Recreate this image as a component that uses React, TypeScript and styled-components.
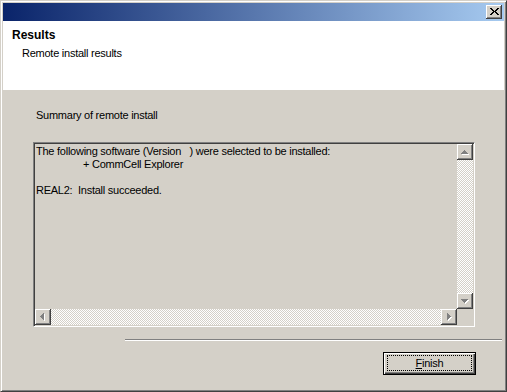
import React from "react";
import styled, { createGlobalStyle } from "styled-components";

const GlobalStyle = createGlobalStyle`
  html, body {
    margin: 0;
    padding: 0;
    background: #d4d0c8;
  }
`;

const FACE = "#d4d0c8";

const Window = styled.div`
  width: 507px;
  height: 392px;
  box-sizing: border-box;
  border: 1px solid;
  border-color: ${FACE} #404040 #404040 ${FACE};
  box-shadow: inset 1px 1px #fff, inset -1px -1px #808080;
  padding: 2px;
  background: ${FACE};
  display: flex;
  flex-direction: column;
  font-family: "Liberation Sans", Arial, sans-serif;
  font-size: 11px;
  line-height: 13px;
  letter-spacing: -0.25px;
  color: #000;
`;

const TitleBar = styled.div`
  height: 18px;
  flex-shrink: 0;
  background: linear-gradient(to right, #0a246a, #a6caf0);
  display: flex;
  align-items: center;
  justify-content: flex-end;
  padding-right: 2px;
`;

const CloseButton = styled.div`
  width: 16px;
  height: 14px;
  box-sizing: border-box;
  background: ${FACE};
  box-shadow: inset -1px -1px #404040, inset 1px 1px #fff,
    inset -2px -2px #808080;
  display: flex;
  align-items: center;
  justify-content: center;
  padding: 0 0 1px 0;
`;

const Header = styled.div`
  height: 69px;
  flex-shrink: 0;
  background: #fff;
  padding: 7px 0 0 9px;
  box-sizing: border-box;
`;

const Title = styled.div`
  font-size: 12px;
  line-height: 14px;
  font-weight: bold;
  letter-spacing: 0;
`;

const Subtitle = styled.div`
  margin-top: 5px;
  padding-left: 10px;
`;

const Body = styled.div`
  flex: 1;
  display: flex;
  flex-direction: column;
  padding-top: 19px;
`;

const SectionLabel = styled.div`
  margin-left: 33px;
`;

const TextBox = styled.div`
  margin: 20px 0 0 30px;
  width: 442px;
  height: 185px;
  box-sizing: border-box;
  border: 1px solid;
  border-color: #808080 #fff #fff #808080;
  box-shadow: inset 1px 1px #404040, inset -1px -1px ${FACE};
  padding: 1px;
  display: grid;
  grid-template-columns: 1fr 16px;
  grid-template-rows: 1fr 16px;
  background: ${FACE};
`;

const TextContent = styled.div`
  padding: 1px 0 0 1px;
  overflow: hidden;
  white-space: pre;
`;

const Line = styled.div<{ $indent?: number }>`
  height: 13px;
  padding-left: ${(p) => p.$indent ?? 0}px;
`;

const ScrollBar = styled.div<{ $vertical?: boolean }>`
  display: flex;
  flex-direction: ${(p) => (p.$vertical ? "column" : "row")};
`;

const Track = styled.div`
  flex: 1;
  background: repeating-conic-gradient(#fff 0 25%, ${FACE} 0 50%) 0 0 / 2px
    2px;
`;

const ScrollButton = styled.div`
  width: 16px;
  height: 16px;
  flex-shrink: 0;
  box-sizing: border-box;
  background: ${FACE};
  box-shadow: inset -1px -1px #404040, inset 1px 1px #fff,
    inset -2px -2px #808080;
`;

const Corner = styled.div`
  background: ${FACE};
`;

const Separator = styled.div`
  margin: 12px 2px 0 122px;
  border-top: 1px solid #808080;
  border-bottom: 1px solid #fff;
`;

const ButtonRow = styled.div`
  display: flex;
  justify-content: flex-end;
  margin: 11px 28px 0 0;
`;

const PushButton = styled.div`
  width: 93px;
  height: 23px;
  box-sizing: border-box;
  border: 1px solid #000;
  background: ${FACE};
  box-shadow: inset 1px 1px #fff, inset -1px -1px #404040,
    inset -2px -2px #808080;
  padding: 2px 3px 3px 3px;
  display: flex;
`;

const FocusRing = styled.div`
  flex: 1;
  border: 1px dotted #000;
  display: flex;
  align-items: center;
  justify-content: center;
  padding-top: 1px;
`;

type Dir = "up" | "down" | "left" | "right";

const arrowRects = (dir: Dir) => {
  const r: { x: number; y: number; w: number; h: number }[] = [];
  for (let i = 0; i < 4; i++) {
    if (dir === "up") r.push({ x: 7 - i, y: 6 + i, w: 2 * i + 1, h: 1 });
    if (dir === "down") r.push({ x: 4 + i, y: 6 + i, w: 7 - 2 * i, h: 1 });
    if (dir === "left") r.push({ x: 5 + i, y: 7 - i, w: 1, h: 2 * i + 1 });
    if (dir === "right") r.push({ x: 6 + i, y: 4 + i, w: 1, h: 7 - 2 * i });
  }
  return r;
};

const Arrow = ({ dir }: { dir: Dir }) => (
  <svg width="16" height="16" shapeRendering="crispEdges">
    {arrowRects(dir).map((a, i) => (
      <rect key={"s" + i} x={a.x + 1} y={a.y + 1} width={a.w} height={a.h} fill="#fff" />
    ))}
    {arrowRects(dir).map((a, i) => (
      <rect key={"g" + i} x={a.x} y={a.y} width={a.w} height={a.h} fill="#808080" />
    ))}
  </svg>
);

const CloseGlyph = () => (
  <svg width="9" height="7" shapeRendering="crispEdges">
    {[0, 1, 2, 3, 4, 5, 6].map((i) => (
      <g key={i}>
        <rect x={i + 0.5 > 3 ? i + 1 : i} y={i} width="2" height="1" fill="#000" />
        <rect x={i + 0.5 > 3 ? 6 - i : 7 - i} y={i} width="2" height="1" fill="#000" />
      </g>
    ))}
  </svg>
);

const lines = [
  { text: "The following software (Version   ) were selected to be installed:" },
  { text: "+ CommCell Explorer", indent: 47 },
  { text: "" },
  { text: "REAL2:  Install succeeded." },
];

const App = () => {
  return (
    <>
      <GlobalStyle />
      <Window>
        <TitleBar>
          <CloseButton>
            <CloseGlyph />
          </CloseButton>
        </TitleBar>
        <Header>
          <Title>Results</Title>
          <Subtitle>Remote install results</Subtitle>
        </Header>
        <Body>
          <SectionLabel>Summary of remote install</SectionLabel>
          <TextBox>
            <TextContent>
              {lines.map((l, i) => (
                <Line key={i} $indent={l.indent}>
                  {l.text}
                </Line>
              ))}
            </TextContent>
            <ScrollBar $vertical>
              <ScrollButton>
                <Arrow dir="up" />
              </ScrollButton>
              <Track />
              <ScrollButton>
                <Arrow dir="down" />
              </ScrollButton>
            </ScrollBar>
            <ScrollBar>
              <ScrollButton>
                <Arrow dir="left" />
              </ScrollButton>
              <Track />
              <ScrollButton>
                <Arrow dir="right" />
              </ScrollButton>
            </ScrollBar>
            <Corner />
          </TextBox>
          <Separator />
          <ButtonRow>
            <PushButton>
              <FocusRing>
                <span>
                  <u>F</u>inish
                </span>
              </FocusRing>
            </PushButton>
          </ButtonRow>
        </Body>
      </Window>
    </>
  );
};

export default App;
